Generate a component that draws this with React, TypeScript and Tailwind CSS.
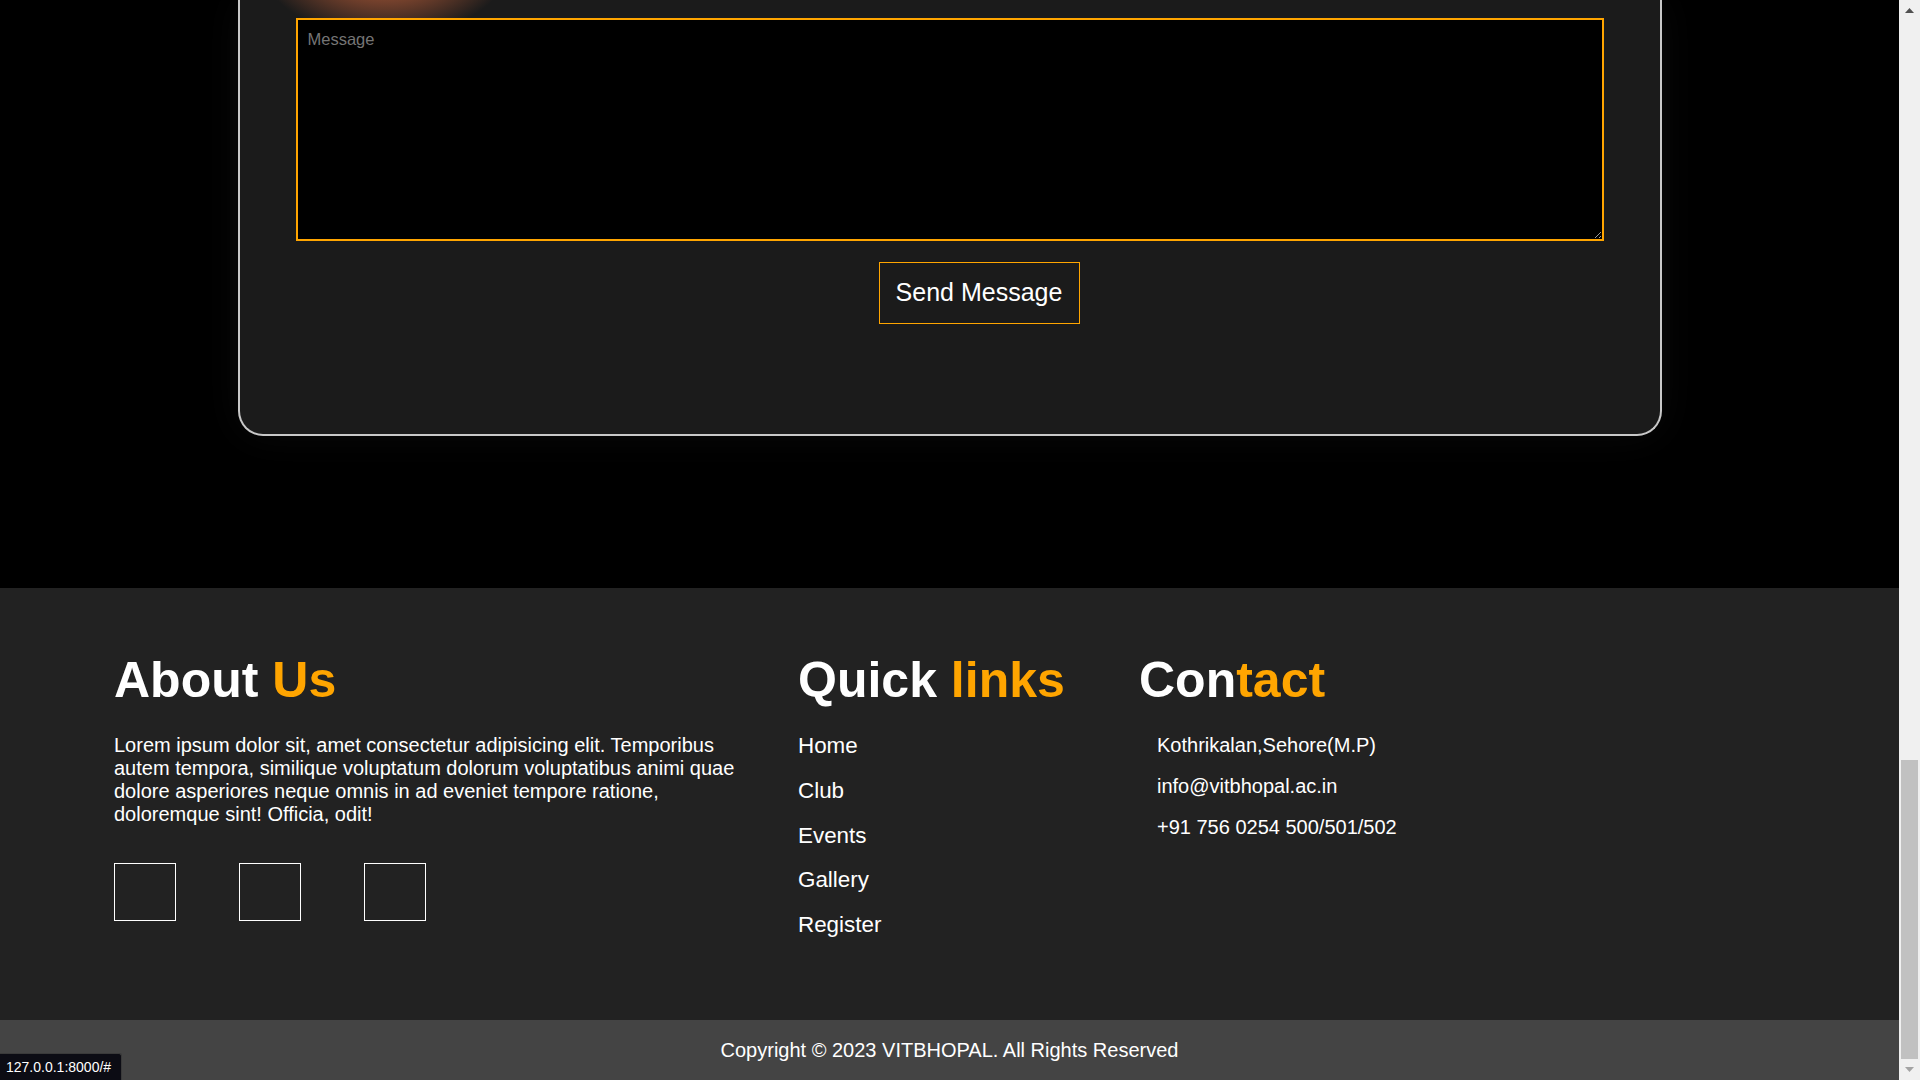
import React from 'react';

const quickLinks = ['Home', 'Club', 'Events', 'Gallery', 'Register'];
const contactItems = ['Kothrikalan,Sehore(M.P)', 'info@vitbhopal.ac.in', '+91 756 0254 500/501/502'];

const Heading: React.FC<{ white: string; orange: string; spaced?: boolean }> = ({ white, orange, spaced }) => (
  <h2 className="text-[50px] font-bold leading-[56px] text-white">
    {white}
    {spaced ? ' ' : ''}
    <span className="text-[#ffa500]">{orange}</span>
  </h2>
);

const ContactCard = () => (
  <div className="relative mx-auto w-[1424px] overflow-hidden rounded-b-[25px] border-x-2 border-b-2 border-[#c8c8c8] bg-[#1b1b1b] pt-[18px] pb-[110px] shadow-[0_0_40px_rgba(255,255,255,0.04)]">
    {/* orange blob peeking from above */}
    <div className="pointer-events-none absolute left-[10px] top-[-150px] h-[190px] w-[270px] rounded-full bg-[radial-gradient(ellipse_at_center,rgba(230,118,66,1)_0%,rgba(200,100,60,0.55)_40%,transparent_70%)]" />
    <textarea
      placeholder="Message"
      className="relative mx-auto block h-[223px] w-[1308px] border-2 border-[#ffa500] bg-black p-[10px] text-[16.5px] leading-[18px] text-white outline-none placeholder:text-[#757575]"
    />
    <div className="mt-[21px] pl-[639px]">
      <button className="h-[62px] w-[201px] border border-[#ffa500] bg-transparent text-[25px] text-white">
        Send Message
      </button>
    </div>
  </div>
);

const Footer = () => (
  <footer>
    <div className="flex h-[432px] bg-[#222222] pl-[114px] pt-[64px]">
      {/* About */}
      <div className="w-[684px] pr-[44px]">
        <Heading white="About" orange="Us" spaced />
        <p className="mt-[26px] text-[20px] leading-[23px] text-white">
          Lorem ipsum dolor sit, amet consectetur adipisicing elit. Temporibus autem tempora, similique voluptatum dolorum
          voluptatibus animi quae dolore asperiores neque omnis in ad eveniet tempore ratione, doloremque sint! Officia,
          odit!
        </p>
        <div className="mt-[37px] flex gap-[63px]">
          <a href="#" className="block h-[58px] w-[62px] border border-white" />
          <a href="#" className="block h-[58px] w-[62px] border border-white" />
          <a href="#" className="block h-[58px] w-[62px] border border-white" />
        </div>
      </div>

      {/* Quick links */}
      <div className="w-[341px]">
        <Heading white="Quick" orange="links" spaced />
        <ul className="mt-[25px] flex flex-col gap-[19px]">
          {quickLinks.map(link => (
            <li key={link} className="text-[22.4px] leading-[25.75px]">
              <a href="#" className="text-white">
                {link}
              </a>
            </li>
          ))}
        </ul>
      </div>

      {/* Contact */}
      <div className="flex-1">
        <Heading white="Con" orange="tact" />
        <ul className="mt-[26px] flex flex-col gap-[18px] pl-[18px]">
          {contactItems.map(item => (
            <li key={item} className="text-[20px] leading-[23px] text-white">
              {item}
            </li>
          ))}
        </ul>
      </div>
    </div>
    <div className="flex h-[60px] items-center justify-center bg-[#444444] text-[20px] text-white">
      Copyright © 2023 VITBHOPAL. All Rights Reserved
    </div>
  </footer>
);

const FakeScrollbar = () => (
  <div className="flex w-[21px] flex-col bg-[#f0f0f0]">
    <div className="flex h-[21px] items-center justify-center">
      <svg width="9" height="5" viewBox="0 0 9 5">
        <path d="M4.5 0 L9 5 L0 5 Z" fill="#505050" />
      </svg>
    </div>
    <div className="flex flex-1 flex-col justify-end px-[2px]">
      <div className="h-[299px] bg-[#c1c1c1]" />
    </div>
    <div className="flex h-[21px] items-center justify-center">
      <svg width="9" height="5" viewBox="0 0 9 5">
        <path d="M0 0 L9 0 L4.5 5 Z" fill="#a3a3a3" />
      </svg>
    </div>
  </div>
);

export default function App() {
  return (
    <div className="relative flex h-[1080px] w-[1920px] overflow-hidden bg-black font-['Liberation_Sans',Arial,sans-serif]">
      <div className="flex flex-1 flex-col">
        <section className="h-[588px] bg-black">
          <ContactCard />
        </section>
        <Footer />
      </div>
      <FakeScrollbar />

      {/* browser status bubble */}
      <div className="absolute bottom-0 left-0 flex h-[27px] w-[122px] items-center rounded-tr-[3px] border-t border-r border-[#3a3a3a] bg-[#0c0c14] pl-[6px] text-[14px] text-white">
        127.0.0.1:8000/#
      </div>
    </div>
  );
}
